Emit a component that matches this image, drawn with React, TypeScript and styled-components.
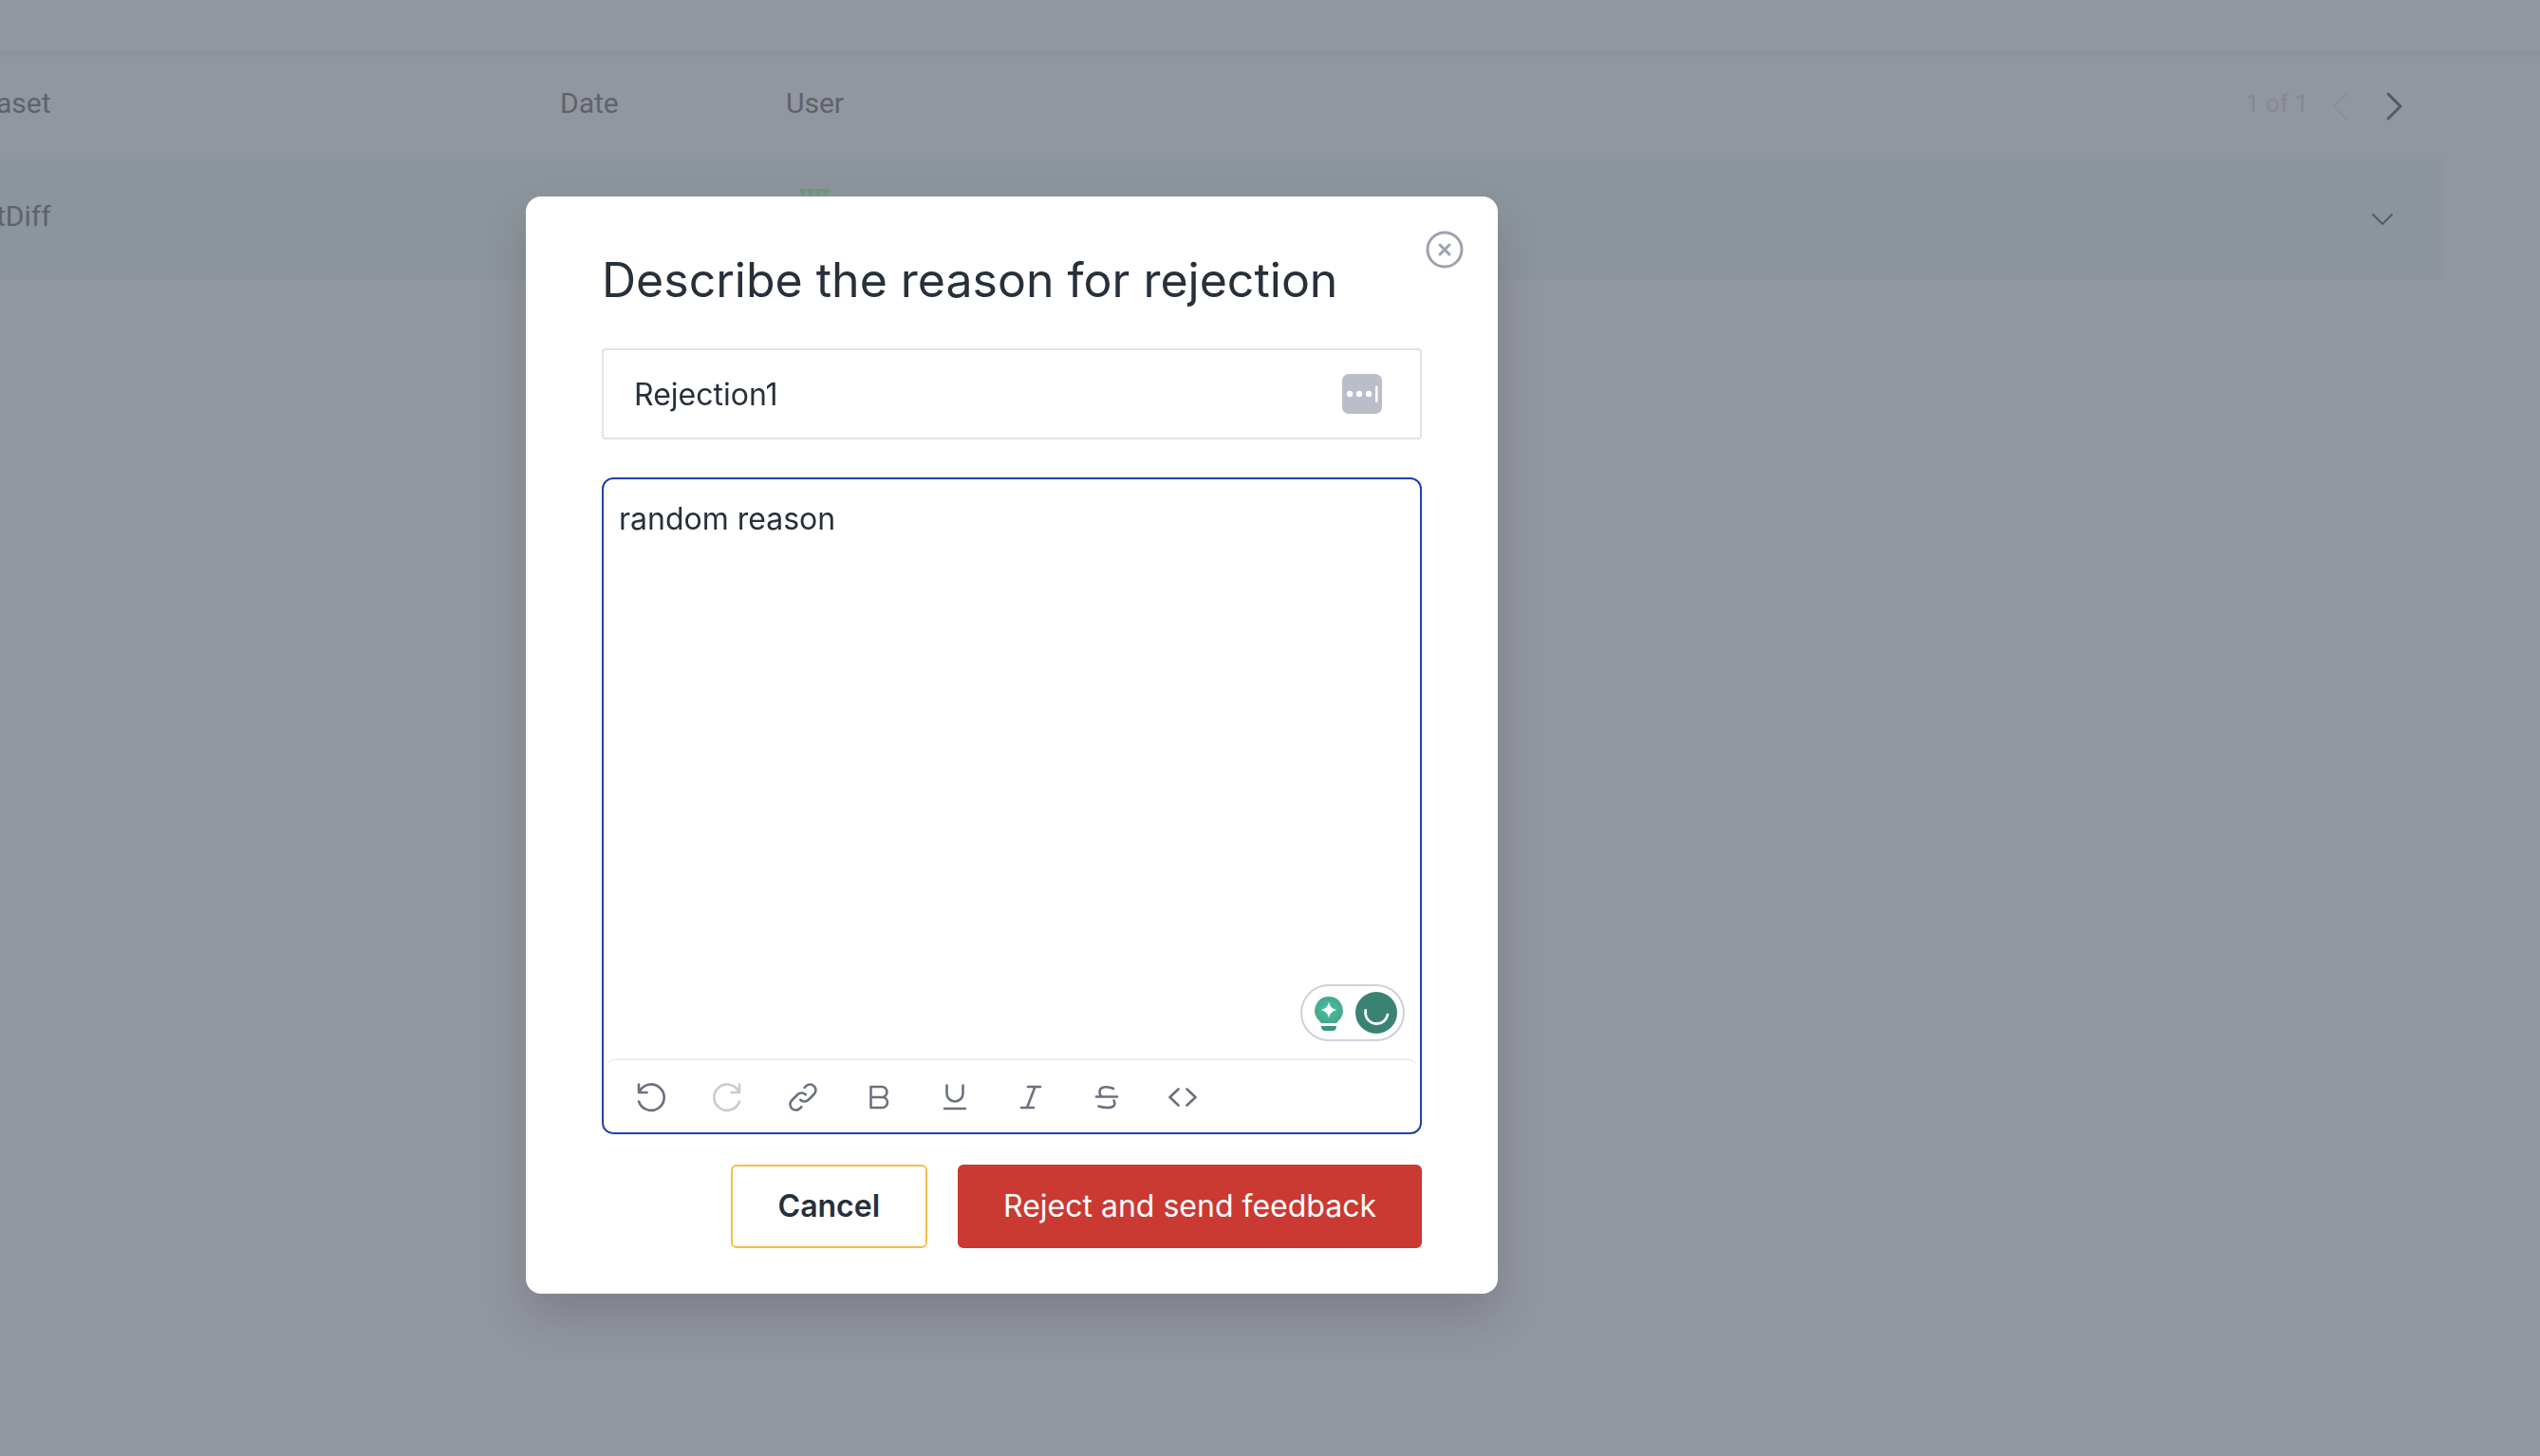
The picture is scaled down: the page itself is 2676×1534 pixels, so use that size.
import React from "react";
import styled, { createGlobalStyle } from "styled-components";

const GlobalStyle = createGlobalStyle`
  * { box-sizing: border-box; }
  html, body { margin: 0; height: 100%; background: #92969f; }
  body { font-family: Inter, "Liberation Sans", sans-serif; color: #27303b; overflow: hidden; }
  button, input, textarea { font: inherit; color: inherit; margin: 0; }
`;

const Page = styled.main`
  min-height: 100vh;
`;

const TopBar = styled.header`
  height: 56px;
  border-bottom: 2px solid #8c9099;
  box-shadow: 0 2px 4px rgba(0, 0, 0, 0.04);
`;

const Table = styled.table`
  width: calc(100% - 102px);
  border-collapse: collapse;
  table-layout: fixed;
  font: 400 30px/40px Roboto, "Liberation Sans", sans-serif;
  color: #5e626d;
`;

const HeadCell = styled.th<{ $width?: number }>`
  width: ${(p) => (p.$width ? `${p.$width}px` : "auto")};
  height: 111px;
  padding: 0 0 6px;
  font-weight: 400;
  text-align: left;
`;

const BodyRow = styled.tr`
  background: #8d959c;
`;

const Cell = styled.td<{ $end?: boolean }>`
  height: 128px;
  padding: 0 ${(p) => (p.$end ? "48px" : "0")} 0 0;
  text-align: ${(p) => (p.$end ? "right" : "left")};
  line-height: 0;
`;

const CutText = styled.span`
  display: block;
  margin-left: -4px;
  line-height: 40px;
`;

const RowText = styled(CutText)`
  padding-bottom: 6px;
`;

const Pager = styled.nav`
  display: flex;
  align-items: center;
  justify-content: flex-end;
  gap: 12px;
  padding-right: 30px;
  font-size: 26px;
  color: #858994;
`;

const PlainButton = styled.button`
  display: inline-flex;
  align-items: center;
  justify-content: center;
  padding: 0;
  border: 0;
  background: none;
  cursor: pointer;
`;

const PagerButton = styled(PlainButton)`
  width: 44px;
  height: 44px;
  color: #555963;
  &:disabled { color: #898d97; }
`;

const RowButton = styled(PlainButton)`
  width: 32px;
  height: 32px;
  color: #555963;
`;

const Overlay = styled.div`
  position: fixed;
  inset: 0;
  display: flex;
  justify-content: center;
  align-items: flex-start;
  padding: 207px 544px 0 0;
`;

const Dialog = styled.section`
  position: relative;
  display: flex;
  flex-direction: column;
  width: 100%;
  max-width: 1024px;
  padding: 56px 80px 48px;
  border-radius: 16px;
  background: #fff;
  box-shadow: 0 24px 48px rgba(0, 0, 0, 0.15);
`;

const Title = styled.h2`
  margin: 0 0 40px;
  font-size: 50px;
  line-height: 64px;
  font-weight: 400;
`;

const CloseButton = styled(PlainButton)`
  position: absolute;
  top: 36px;
  right: 36px;
  color: #9ca2b1;
`;

const InputFrame = styled.label`
  display: flex;
  align-items: center;
  height: 96px;
  margin-bottom: 40px;
  padding: 0 40px 0 32px;
  border: 2px solid #e4e4e4;
  border-radius: 4px;
`;

const NameInput = styled.input`
  flex: 1;
  min-width: 0;
  padding: 2px 0 0;
  border: 0;
  outline: 0;
  background: none;
  font-size: 32px;
  line-height: 48px;
`;

const Editor = styled.div`
  display: flex;
  flex-direction: column;
  margin-bottom: 32px;
  border: 2px solid #2342a8;
  border-radius: 12px;
`;

const TextFrame = styled.div`
  position: relative;
  display: flex;
`;

const ReasonText = styled.textarea`
  flex: 1;
  height: 610px;
  padding: 18px 16px;
  border: 0;
  outline: 0;
  resize: none;
  background: none;
  font-size: 32px;
  line-height: 48px;
`;

const Assistant = styled.div`
  position: absolute;
  right: 16px;
  bottom: 18px;
  display: flex;
  width: 110px;
  height: 60px;
  border: 2px solid #cfd0de;
  border-radius: 30px;
  background: #fff;
`;

const Toolbar = styled.div`
  display: flex;
  align-items: center;
  height: 78px;
  margin: 0 2px;
  padding: 2px 8px 0;
  border-top: 2px solid #eceff6;
  border-radius: 12px;
  color: #6b717e;
`;

const Tool = styled(PlainButton)`
  width: 80px;
  height: 64px;
  color: inherit;
  &:disabled { color: #c8ccd3; }
`;

const Actions = styled.div`
  display: flex;
  justify-content: flex-end;
  gap: 32px;
`;

const Action = styled.button<{ $danger?: boolean }>`
  height: 88px;
  padding: 0 ${(p) => (p.$danger ? 46 : 48)}px;
  border: 2px solid ${(p) => (p.$danger ? "#ca3932" : "#f5be4a")};
  border-radius: 6px;
  background: ${(p) => (p.$danger ? "#ca3932" : "#fff")};
  color: ${(p) => (p.$danger ? "#fff" : "#27303b")};
  font-size: 32px;
  line-height: 48px;
  font-weight: ${(p) => (p.$danger ? 400 : 600)};
  white-space: nowrap;
  cursor: pointer;
`;

const Stroke = styled.svg`
  display: block;
  fill: none;
  stroke: currentColor;
  stroke-linecap: round;
  stroke-linejoin: round;
`;

/* Toolbar glyphs, all drawn around the centre of a 48-unit box. */
const tools: { label: string; disabled?: boolean; art: React.ReactNode }[] = [
  { label: "Undo", art: <path d="M11 10.5v8.5h8.5M11.5 18.5A13.7 13.7 0 1 1 11 28.5" /> },
  { label: "Redo", disabled: true, art: <path d="M37 10.5v8.5h-8.5M36.5 18.5A13.7 13.7 0 1 0 37 28.5" /> },
  {
    label: "Link",
    art: (
      <path
        transform="translate(6 6) scale(1.5)"
        strokeWidth="1.7"
        d="M13.828 10.172a4 4 0 00-5.656 0l-4 4a4 4 0 105.656 5.656l1.102-1.101m-.758-4.899a4 4 0 005.656 0l4-4a4 4 0 00-5.656-5.656l-1.1 1.1"
      />
    ),
  },
  { label: "Bold", art: <path d="M15.5 13H27a5.5 5.5 0 0 1 0 11H15.500zM15.5 24H27.5a5.5 5.5 0 0 1 0 11H15.5z" /> },
  { label: "Underline", art: <path d="M15.5 11.5V20a8.5 8.5 0 0 0 17 0V11.5M13 36H35" /> },
  { label: "Italic", art: <path d="M21 13H34M14 35H27M28.5 13L20 35" /> },
  { label: "Strikethrough", art: <path d="M13 23.5H35M31 15C26 12.5 17 12 16.5 18C16.4 20.5 17 22 18.5 23.5M31.5 27.5C34 33 30.5 35 25 35C21 35 18.5 34.5 15.5 33.5" /> },
  { label: "Code", art: <path d="M19.5 15.5L10.5 24L19.5 32.5M28.5 15.5L37.5 24L28.5 32.5" /> },
];

const Avatar = () => (
  <svg width="64" height="64" viewBox="0 0 64 64" role="img" aria-label="User avatar">
    <circle cx="32" cy="32" r="32" fill="#90949d" />
    <path d="M14 0h8l-4 10zM22 0h8l-4 10zM30 0h8l-4 10zM38 0h8l-4 10z" fill="#6f9a7a" />
  </svg>
);

const PasswordGlyph = () => (
  <svg width="42" height="42" viewBox="0 0 42 42" aria-hidden="true">
    <rect width="42" height="42" rx="7" fill="#babec8" />
    <g fill="#fff">
      <circle cx="8" cy="21" r="3.2" />
      <circle cx="18" cy="21" r="3.2" />
      <circle cx="28" cy="21" r="3.2" />
      <rect x="35" y="12.5" width="2.5" height="17.5" rx="1" />
    </g>
  </svg>
);

const AssistantArt = () => (
  <svg width="106" height="56" viewBox="0 0 106 56" aria-hidden="true">
    <defs>
      <radialGradient id="bulb">
        <stop offset="0" stopColor="#3fc6a2" />
        <stop offset="1" stopColor="#49a58d" />
      </radialGradient>
      <radialGradient id="halo">
        <stop offset="0.6" stopColor="#e4f4f0" />
        <stop offset="1" stopColor="#fff" />
      </radialGradient>
    </defs>
    <circle cx="28" cy="25" r="18" fill="url(#halo)" />
    <path d="M28 11a14.7 14.7 0 0 1 10.5 25L36 39H20L17.5 36A14.7 14.7 0 0 1 28 11z" fill="url(#bulb)" />
    <path d="M28 16.5C29.5 22.500 31.500 23.500 36.500 25C31.500 26.500 29.500 28 28 33.500C26.500 28 24.500 26.500 19.500 25C24.500 23.500 26.500 22.500 28 16.5z" fill="#fff" />
    <path d="M20 42H36C36 45.5 34.5 47 32 47H24C21.5 47 20 45.5 20 42z" fill="#3c9480" />
    <circle cx="78" cy="28" r="22" fill="#3a8374" />
    <path d="M66.7 25.5C65.5 34 71.5 39.5 78 39.5C84 39.5 88.5 36 90 30" fill="none" stroke="#fff" strokeWidth="2.8" strokeLinecap="round" />
  </svg>
);

export default function App() {
  return (
    <>
      <GlobalStyle />
      <Page>
        <TopBar />
        <Table>
          <thead>
            <tr>
              <HeadCell $width={590}><CutText>aset</CutText></HeadCell>
              <HeadCell $width={238}>Date</HeadCell>
              <HeadCell>User</HeadCell>
              <HeadCell $width={400}>
                <Pager aria-label="Pages">
                  <span>1 of 1</span>
                  <PagerButton aria-label="Previous page" disabled>
                    <Stroke width="32" height="40" strokeWidth="2">
                      <path d="M22 10L9 23L22 36" />
                    </Stroke>
                  </PagerButton>
                  <PagerButton aria-label="Next page">
                    <Stroke width="32" height="40" strokeWidth="3">
                      <path d="M10 10L23 23L10 36" />
                    </Stroke>
                  </PagerButton>
                </Pager>
              </HeadCell>
            </tr>
          </thead>
          <tbody>
            <BodyRow>
              <Cell><RowText>tDiff</RowText></Cell>
              <Cell />
              <Cell><Avatar /></Cell>
              <Cell $end>
                <RowButton aria-label="Expand row">
                  <Stroke width="32" height="32" strokeWidth="2">
                    <path d="M6 11L16 21L26 11" />
                  </Stroke>
                </RowButton>
              </Cell>
            </BodyRow>
          </tbody>
        </Table>
      </Page>

      <Overlay>
        <Dialog role="dialog" aria-modal="true" aria-labelledby="dialog-title">
          <CloseButton aria-label="Close">
            <Stroke width="40" height="40" strokeWidth="3">
              <circle cx="20" cy="20" r="18" />
              <path d="M15 15L25 25M25 15L15 25" />
            </Stroke>
          </CloseButton>
          <Title id="dialog-title">Describe the reason for rejection</Title>
          <InputFrame>
            <NameInput aria-label="Rejection name" defaultValue="Rejection1" />
            <PasswordGlyph />
          </InputFrame>
          <Editor>
            <TextFrame>
              <ReasonText aria-label="Reason" defaultValue="random reason" spellCheck={false} />
              <Assistant>
                <AssistantArt />
              </Assistant>
            </TextFrame>
            <Toolbar role="toolbar" aria-label="Formatting">
              {tools.map((t) => (
                <Tool key={t.label} type="button" aria-label={t.label} disabled={t.disabled}>
                  <Stroke width="48" height="48" viewBox="0 0 48 48" strokeWidth="2.6">
                    {t.art}
                  </Stroke>
                </Tool>
              ))}
            </Toolbar>
          </Editor>
          <Actions>
            <Action type="button">Cancel</Action>
            <Action type="button" $danger>Reject and send feedback</Action>
          </Actions>
        </Dialog>
      </Overlay>
    </>
  );
}
